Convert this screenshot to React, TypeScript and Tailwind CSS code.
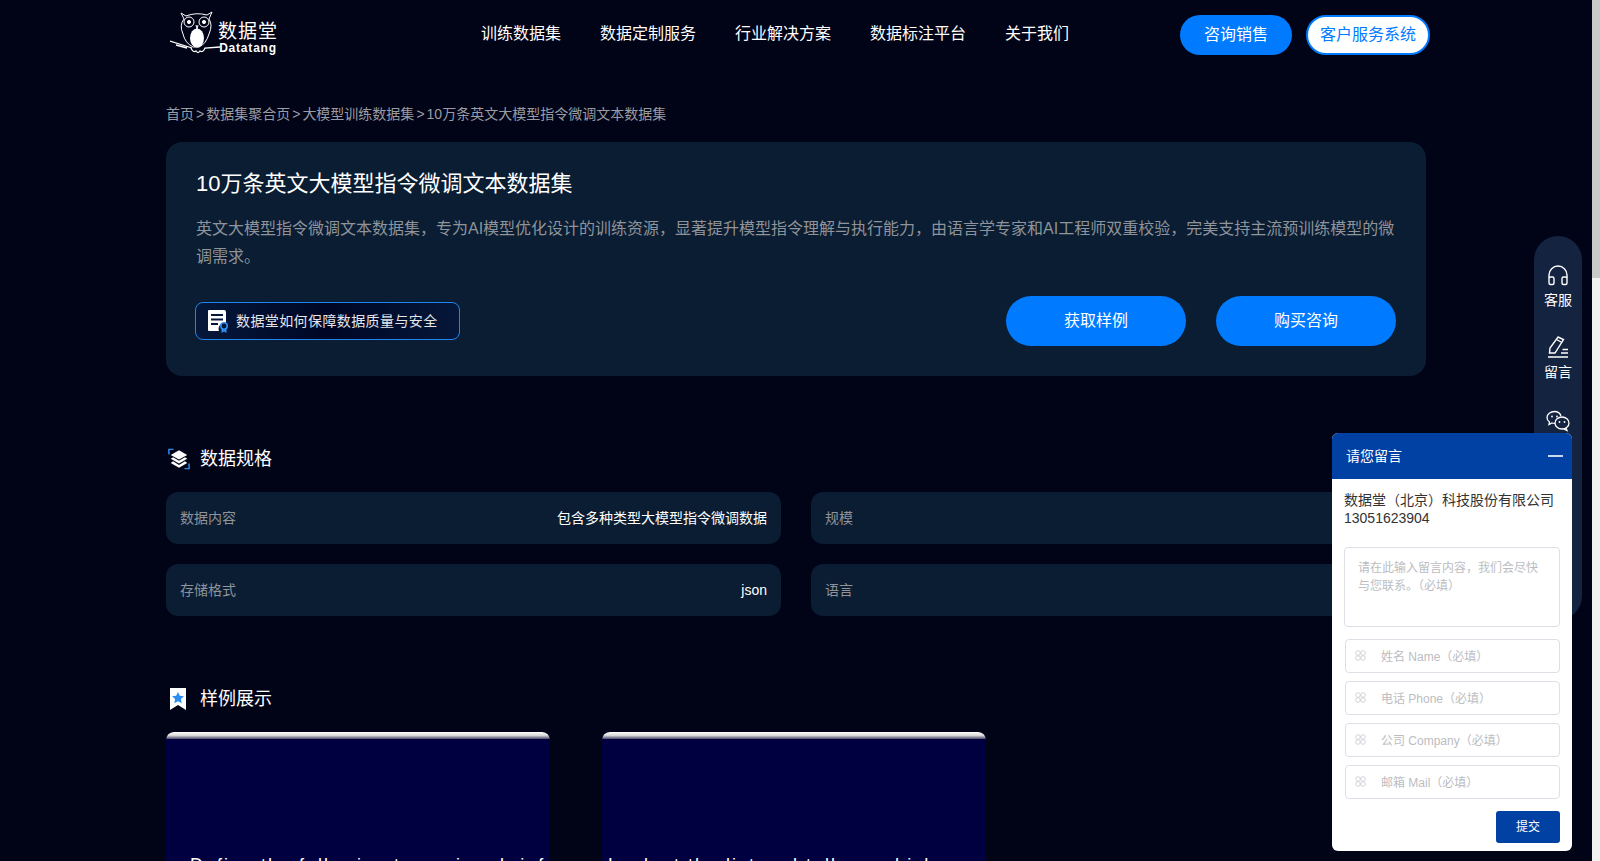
import React from 'react';

const FONT = "font-['Liberation_Sans','Noto_Sans_CJK_SC',sans-serif]";

const navItems = ['训练数据集', '数据定制服务', '行业解决方案', '数据标注平台', '关于我们'];

const specs = [
  { label: '数据内容', value: '包含多种类型大模型指令微调数据' },
  { label: '规模', value: '10万条' },
  { label: '存储格式', value: 'json' },
  { label: '语言', value: '英文' },
];

const fields = ['姓名 Name（必填）', '电话 Phone（必填）', '公司 Company（必填）', '邮箱 Mail（必填）'];

const OwlLogo = () => (
  <svg width="54" height="46" viewBox="0 0 54 46" fill="none" stroke="white" strokeWidth="1">
    <path d="M11 3 L16 6 Q26 2 37 5 L42 2 L39 9 Q43 15 39 24 Q36 34 29 37 L23 37 Q15 33 13 24 Q9 15 14 9 Z" />
    <circle cx="19" cy="12" r="5" />
    <circle cx="34" cy="12" r="5" />
    <circle cx="19" cy="12" r="1.6" fill="white" />
    <circle cx="34" cy="12" r="1.6" fill="white" />
    <path d="M26 15 L27 19 L28 15" />
    <ellipse cx="27" cy="28" rx="7" ry="9.5" fill="white" stroke="none" />
    <path d="M0 31 L22 38 M6 35 L17 38 M21 38 Q23 43 26 41 Q28 44 30 41 Q33 43 35 38 L50 37" strokeWidth="1.3" />
  </svg>
);

const QualityIcon = () => (
  <svg width="22" height="24" viewBox="0 0 22 24">
    <path d="M1 2 Q1 1 2 1 H17 Q19 1 19 3 V14 A6 6 0 0 0 12 22 H2 Q1 22 1 21 Z" fill="white" />
    <rect x="4" y="5" width="12" height="2" fill="#06183a" />
    <rect x="4" y="9.5" width="12" height="2" fill="#06183a" />
    <rect x="4" y="14" width="7" height="2" fill="#06183a" />
    <circle cx="17" cy="17" r="3.2" fill="none" stroke="#2d8cf0" strokeWidth="1.6" />
    <path d="M14.5 20 V24 L17 22.5 L19.5 24 V20" fill="#2d8cf0" />
  </svg>
);

const StackIcon = () => (
  <svg width="22" height="22" viewBox="0 0 24 24" fill="none" className="ml-[2px]">
    <path d="M1 7 V1.5 H6" stroke="#2d8cf0" strokeWidth="1.6" />
    <path d="M23 17 V22.5 H18" stroke="#2d8cf0" strokeWidth="1.6" />
    <path d="M12 2.5 L21 7.5 L12 12.5 L3 7.5 Z" fill="white" />
    <path d="M5.5 10 L12 14 L18.5 10 L21 11.8 L12 17 L3 11.8 Z" fill="white" />
    <path d="M5.5 14.5 L12 18.5 L18.5 14.5 L21 16.3 L12 21.5 L3 16.3 Z" fill="white" />
  </svg>
);

const BookmarkIcon = () => (
  <svg width="24" height="24" viewBox="0 0 24 24">
    <path d="M4 1 H20 V23 L12 18 L4 23 Z" fill="white" />
    <path d="M12 5 L13.8 8.8 L18 9.3 L14.9 12.1 L15.7 16.2 L12 14.2 L8.3 16.2 L9.1 12.1 L6 9.3 L10.2 8.8 Z" fill="#2d8cf0" />
  </svg>
);

const HeadsetIcon = () => (
  <svg width="22" height="22" viewBox="0 0 22 22" fill="none" stroke="white" strokeWidth="1.4">
    <path d="M2 13 V10 A9 9 0 0 1 20 10 V13" />
    <rect x="2" y="12" width="5" height="7.5" rx="1.5" />
    <rect x="15" y="12" width="5" height="7.5" rx="1.5" />
  </svg>
);

const PenIcon = () => (
  <svg width="24" height="24" viewBox="0 0 24 24" fill="none" stroke="white" strokeWidth="1.4">
    <path d="M12 2 L17.5 4.5 L9 18 H3.5 L4 13 Z" />
    <path d="M10.5 4.5 L16 7.5" />
    <path d="M2 22 H22 M15 18 H22 M16.5 14.5 H22" />
  </svg>
);

const WechatIcon = () => (
  <svg width="24" height="22" viewBox="0 0 24 22" fill="none" stroke="white" strokeWidth="1.3">
    <path d="M15 6 C14 3 11 1.5 8.5 1.5 C4.5 1.5 1 4.2 1 7.5 C1 9.5 2 11 3.5 12 L3 14.5 L6 13 C7 13.3 8 13.4 9 13.4" />
    <ellipse cx="16" cy="13" rx="7" ry="6" />
    <path d="M20 18 L21 20.5 L17.5 19" />
    <circle cx="6" cy="6.5" r="0.9" fill="white" stroke="none" />
    <circle cx="11" cy="6.5" r="0.9" fill="white" stroke="none" />
    <circle cx="13.5" cy="12" r="0.9" fill="white" stroke="none" />
    <circle cx="18.5" cy="12" r="0.9" fill="white" stroke="none" />
  </svg>
);

const RingsIcon = () => (
  <svg width="11" height="11" viewBox="0 0 11 11" fill="none" stroke="#c8c9cf" strokeWidth="0.8" className="mb-[2px]">
    <circle cx="3" cy="3" r="2.3" />
    <circle cx="8" cy="3" r="2.3" />
    <circle cx="3" cy="8" r="2.3" />
    <circle cx="8" cy="8" r="2.3" />
  </svg>
);

const SampleCard = ({ text, textClass }: { text: string; textClass: string }) => (
  <div className="w-[384px] h-[240px] rounded-t-lg overflow-hidden bg-[#000040]">
    <div className="h-[7px] rounded-t-lg bg-gradient-to-b from-white via-[#d8d8d8] to-[#4a4a6a]" />
    <p className={`mt-[114px] text-[18px] leading-6 tracking-[2px] text-white ${textClass}`}>{text}</p>
  </div>
);

export default function App() {
  return (
    <div className={`${FONT} relative flex h-screen overflow-hidden bg-[#010317]`}>
      <div className="flex-1">
        <div className="w-[1260px] mx-auto">
          {/* шапка */}
          <header className="flex items-center h-[70px]">
            <div className="flex items-center w-[315px] pl-1 shrink-0">
              <div className="-mt-[5px]">
                <OwlLogo />
              </div>
              <div className="-ml-[6px] mt-[5px] flex flex-col items-center text-white">
                <span className="text-[19px] leading-[20px] tracking-[1px]">数据堂</span>
                <span className="text-[12px] leading-[12px] font-bold tracking-[0.8px]">Datatang</span>
              </div>
            </div>
            <nav className="flex gap-[39px] text-[16px] text-white -mt-[2px]">
              {navItems.map((item) => (
                <span key={item}>{item}</span>
              ))}
            </nav>
            <div className="ml-auto -mr-1 flex gap-[14px] text-[16px]">
              <button className="w-[112px] h-10 rounded-[20px] bg-[#007aff] text-white">咨询销售</button>
              <button className="w-[124px] h-10 rounded-[20px] bg-white border-2 border-[#007aff] text-[#007aff]">
                客户服务系统
              </button>
            </div>
          </header>

          {/* хлебные крошки */}
          <div className="flex gap-[2px] mt-[34px] h-5 items-center text-[14px] text-[#9a9ca3]">
            <span>首页</span>
            <span>&gt;</span>
            <span>数据集聚合页</span>
            <span>&gt;</span>
            <span>大模型训练数据集</span>
            <span>&gt;</span>
            <span>10万条英文大模型指令微调文本数据集</span>
          </div>

          {/* карточка датасета */}
          <section className="mt-[18px] h-[234px] rounded-2xl bg-[#0a1d32] pl-[30px] pr-[30px] pt-[26px]">
            <h1 className="text-[22px] leading-[32px] text-white">10万条英文大模型指令微调文本数据集</h1>
            <p className="mt-[15px] text-[16px] leading-[28px] text-[#8f939a]">
              英文大模型指令微调文本数据集，专为AI模型优化设计的训练资源，显著提升模型指令理解与执行能力，由语言学专家和AI工程师双重校验，完美支持主流预训练模型的微调需求。
            </p>
            <div className="flex items-center justify-between mt-[25px]">
              <div className="flex items-center gap-[7px] w-[265px] h-[38px] -ml-px pl-[11px] rounded-lg border border-[#1e86ee] bg-gradient-to-r from-[#06183a] via-[#000625] to-[#06183a] text-[14px] tracking-[0.4px] text-[#e4e6ea]">
                <QualityIcon />
                <span>数据堂如何保障数据质量与安全</span>
              </div>
              <div className="flex gap-[30px] text-[16px] text-white">
                <button className="w-[180px] h-[50px] rounded-[25px] bg-[#007aff]">获取样例</button>
                <button className="w-[180px] h-[50px] rounded-[25px] bg-[#007aff]">购买咨询</button>
              </div>
            </div>
          </section>

          {/* характеристики */}
          <div className="flex items-center gap-[10px] mt-[69px] h-7 text-[18px] text-white">
            <StackIcon />
            <span>数据规格</span>
          </div>
          <div className="grid grid-cols-2 gap-x-[30px] gap-y-5 mt-[19px]">
            {specs.map((spec) => (
              <div key={spec.label} className="flex items-center justify-between h-[52px] px-[14px] rounded-xl bg-[#0a1d32] text-[14px]">
                <span className="text-[#8f939a]">{spec.label}</span>
                <span className="text-white">{spec.value}</span>
              </div>
            ))}
          </div>

          {/* примеры */}
          <div className="flex items-center gap-[10px] mt-[69px] h-7 text-[18px] text-white">
            <BookmarkIcon />
            <span>样例展示</span>
          </div>
          <div className="flex gap-[52px] mt-[19px]">
            <SampleCard text="Define the following terms in a brief statement." textClass="ml-6" />
            <SampleCard text="Look at the list and tell me which one is the best." textClass="ml-[6px]" />
          </div>
        </div>
      </div>

      {/* полоса прокрутки */}
      <div className="w-2 shrink-0 bg-[#f1f1f1]">
        <div className="h-[278px] bg-[#c9c9c9]" />
      </div>

      {/* боковая панель */}
      <div className="absolute left-[1534px] top-[236px] w-12 h-[384px] rounded-3xl bg-[#14233f] flex flex-col items-center pt-[29px] text-[14px] text-white">
        <HeadsetIcon />
        <span className="mt-[3px] leading-5">客服</span>
        <div className="mt-[25px]"><PenIcon /></div>
        <span className="mt-[3px] leading-5">留言</span>
        <div className="mt-[28px]"><WechatIcon /></div>
      </div>

      {/* окно сообщения */}
      <div className="absolute left-[1332px] top-[433px] w-60 h-[418px] rounded-md overflow-hidden bg-white">
        <div className="flex items-center justify-between h-[46px] pl-[14px] pr-[9px] bg-[#0041a3] text-[14px] text-white">
          <span>请您留言</span>
          <span className="w-[15px] h-[2px] bg-[#c9d8f0]" />
        </div>
        <div className="px-3 pt-3">
          <p className="text-[14px] leading-[18px] text-[#333]">
            数据堂（北京）科技股份有限公司
            <br />
            13051623904
          </p>
          <div className="mt-[20px] h-20 rounded border border-[#dcdfe6] pl-[13px] pr-5 pt-[11px] text-[12px] leading-[18px] text-[#bbbdc2]">
            请在此输入留言内容，我们会尽快与您联系。（必填）
          </div>
          <div className="flex flex-col gap-2 mt-3 ml-px">
            {fields.map((field) => (
              <div key={field} className="flex items-center gap-[15px] h-[34px] pl-[9px] rounded border border-[#dcdfe6] text-[12px] text-[#bbbdc2]">
                <RingsIcon />
                <span className="mt-[2px]">{field}</span>
              </div>
            ))}
          </div>
          <div className="flex justify-end mt-3">
            <button className="w-16 h-8 rounded-[3px] bg-[#0041a3] text-[12px] text-white">提交</button>
          </div>
        </div>
      </div>
    </div>
  );
}
